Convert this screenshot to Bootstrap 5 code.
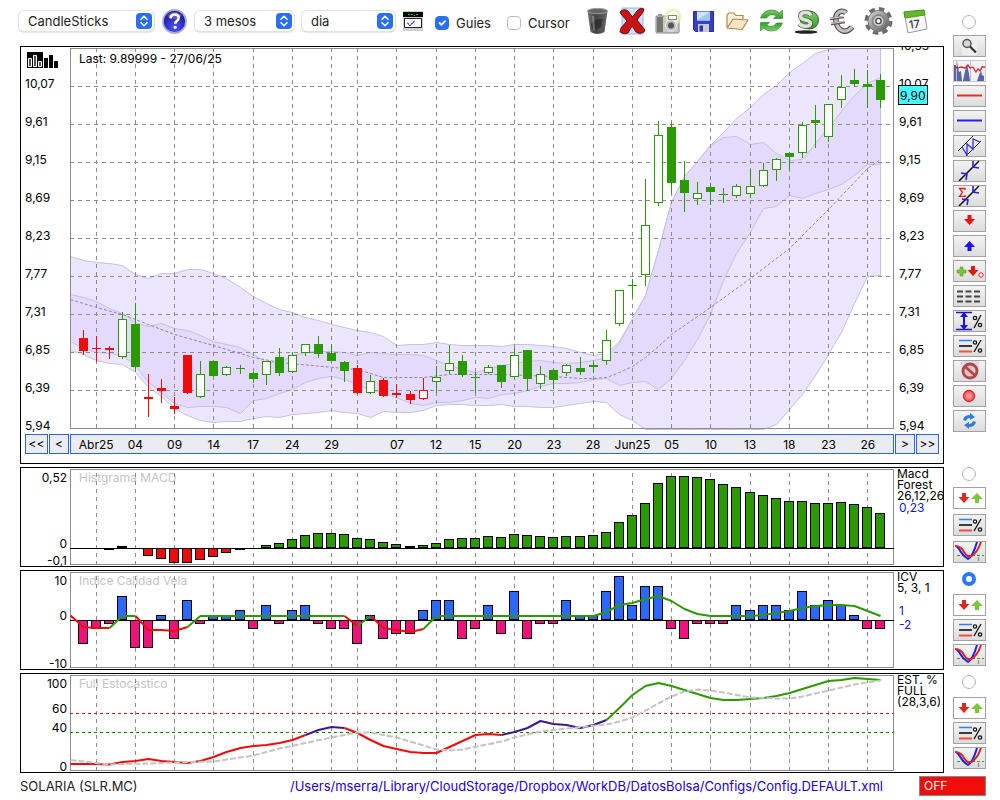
<!DOCTYPE html>
<html lang="ca">
<head>
<meta charset="utf-8">
<meta name="viewport" content="width=device-width, initial-scale=1">
<title>SOLARIA (SLR.MC)</title>
<link rel="stylesheet" href="https://cdn.jsdelivr.net/npm/bootstrap@5.3.0/dist/css/bootstrap.min.css">
<style>
body{font-family:Inter,"Liberation Sans",sans-serif;font-size:12px;line-height:16px;color:#000;background:#fff}
.page{padding:0 14px 0 20px}
.cols{gap:9px}
.panels{gap:3px}
.left-col,.plot{min-width:0}
.toolbar{height:46px;padding-bottom:4px;margin-left:-1px}
.toolbar .form-select{height:20px;padding:0 30px 0 9px;font-size:13px;line-height:20px;border:0;border-radius:5px;color:#222;background-color:#fff;
 box-shadow:0 0 0 1px #e2e2e2,0 1px 2px #aaa;background-repeat:no-repeat;background-position:right 2px center;background-size:16px 16px;
 background-image:url("data:image/svg+xml,%3Csvg xmlns='http://www.w3.org/2000/svg' viewBox='0 0 16 16'%3E%3Crect width='16' height='16' rx='4' fill='%232a6df6'/%3E%3Cpath d='M5 6.300l3-3 3 3M5 9.700l3 3 3-3' fill='none' stroke='%23fff' stroke-width='1.600' stroke-linecap='round' stroke-linejoin='round'/%3E%3C/svg%3E")}
.toolbar .sel-type{width:135px}.toolbar .sel-range{width:99px}.toolbar .sel-step{width:93px}
.tool{border:0;background:none;padding:0;display:block;line-height:0}
.tick{gap:7px;font-size:13px;color:#222}
.tick .form-check-input{width:14px;height:14px;margin:0;border:1px solid #bbb;border-radius:4px}
.tick .form-check-input:checked{background-color:#2a6df6;border-color:#2a6df6}
.icons{gap:10px;margin-right:16px}
.round-pick{width:14px;height:14px;margin:0 2px 0 0;display:block;border:1px solid #b5b5b5;background:#fff}
.round-pick:checked{background:#fff;border:4px solid #2a78f6;background-image:none}
.side{width:33px;flex:none}
.side .ibtn{width:33px;height:22px;padding:0;border:1px solid #a2a2a2;background:linear-gradient(#f3f3f3,#dcdcdc);display:block;line-height:0;overflow:hidden}
.side .ibtn.plain{background:#fff}
.side .ibtn.bare{border-color:#c8c8d8;background:#f1f1f7}
.ibtn svg{display:block;width:31px;height:20px}
.pick-top{height:35px;padding-top:15px}
.gap-a{gap:3px}.mt-a{margin-top:3px}
.grp{gap:3px;padding-top:2px}
.grp .round-pick{margin-bottom:5px}
.grp.wide{gap:5px;padding-top:0}
.grp.wide .round-pick{margin-bottom:1px}
.panel{border:1px solid #000;overflow:hidden;background:#fff}
.axis-l,.axis-r{width:49px;flex:none}
.main-plot{height:383px}
.ylab{height:38px;line-height:38px;padding-left:4px}
.axis-r .ylab{padding-left:5px}
.logo-slot{height:18px;padding:5px 0 0 6px}
.axis-r.main-y{margin-top:-20px}
.plot svg{display:block;width:100%;height:100%}
.note{left:9px;top:2px}
.note.first-note{top:4px}
.price{left:4px;top:38px;padding:0 1px;height:20px;line-height:20px;border:1px solid #000;background:#4ff}
.nav-row{padding:4px 4px 9px 4px;gap:1px}
.nav-row .step{flex:none;height:20px;padding:0;border:1px solid #2a63f2;background:#ebebf2;font-size:12px;line-height:18px;color:#000}
.nav-row .s2{width:23px}.nav-row .s1{width:20px}
.dates{height:20px;min-width:0;box-shadow:inset 0 0 0 1px #2a63f2;background:#ebebf2;display:grid;grid-template-columns:repeat(63,minmax(0,1fr));line-height:22px}
.dates span{justify-self:center;white-space:nowrap}
.sub{height:100px}
.scale{display:grid;padding:2px 3px 0 0;text-align:right;align-content:start}
.scale.macd{grid-template-rows:66px 17px 16px}
.scale.icv{grid-template-rows:35px 48px 16px}
.scale.sto{grid-template-rows:25px 19px 39px 16px}
.cap{line-height:11px;padding:0 0 0 3px;white-space:nowrap}
.cap .val{color:#11e;line-height:14px;padding-left:2px}
.cap .gap-top{padding-top:11px}
.faint{color:#c4c4c4}
.foot{height:26px;font-size:13px}
.foot span{color:#222}
.path-link{color:#2200e0;text-decoration:none;margin-right:36px}
.off{width:67px;height:20px;border:1px solid #888;background:#f20d0d;color:#fff;font-size:12px;line-height:16px;padding:0 0 0 4px;text-align:left}
</style>
</head>
<body>
<svg width="0" height="0" class="position-absolute" aria-hidden="true">
<defs>
<linearGradient id="gGray" x1="0" y1="0" x2="1" y2="1"><stop offset="0" stop-color="#ddd"/><stop offset=".5" stop-color="#999"/><stop offset="1" stop-color="#555"/></linearGradient>
<linearGradient id="gDark" x1="0" x2="1"><stop offset="0" stop-color="#777"/><stop offset=".4" stop-color="#444"/><stop offset="1" stop-color="#666"/></linearGradient>
<linearGradient id="gGreen" x1="0" y1="0" x2="0" y2="1"><stop offset="0" stop-color="#7fd06a"/><stop offset="1" stop-color="#2f9a2b"/></linearGradient>
<radialGradient id="gHelp" cx=".5" cy=".75" r=".7"><stop offset="0" stop-color="#4a55ff"/><stop offset="1" stop-color="#17128a"/></radialGradient>
<radialGradient id="gGlow"><stop offset="0" stop-color="#fff"/><stop offset=".6" stop-color="#fbf8cc"/><stop offset=".85" stop-color="#e9e29a"/><stop offset="1" stop-color="#fff" stop-opacity="0"/></radialGradient>
<symbol id="updown" viewBox="0 0 31 20"><path d="M8 5h4v4h3.500l-5.500 6-5.500-6H8z" fill="#dc2a20"/><path d="M21 15h4v-4h4l-6-6-6 6h4z" fill="#7cc63c"/></symbol>
<symbol id="pct" viewBox="0 0 31 20"><path d="M5 4.500h13" stroke="#3a7af5" stroke-width="1.500"/><path d="M5 10h13" stroke="#000" stroke-width="1.500"/><path d="M5 15.500h13" stroke="#f0503c" stroke-width="2"/><path d="M20 16L27 4" stroke="#111" stroke-width="1.300"/><circle cx="21" cy="6.500" r="1.700" fill="none" stroke="#111" stroke-width="1.200"/><circle cx="26" cy="14.500" r="1.700" fill="none" stroke="#111" stroke-width="1.200"/></symbol>
<symbol id="cross" viewBox="0 0 31 20"><path d="M3 13.500h27" stroke="#3a9b2c" stroke-dasharray="3 2"/><path d="M24.500 15v4" stroke="#999" stroke-width="1.500"/><path d="M2 4q3 2 5 6t7 7q5-3 9-17" fill="none" stroke="#1a22f0" stroke-width="2"/><path d="M1 4q6 0 9 6 4 7 9 3 5-4 8-13" fill="none" stroke="#e0241c" stroke-width="2"/></symbol>
</defs>
</svg>

<div class="page">
 <div class="d-flex cols">
  <div class="flex-fill left-col">
   <header class="toolbar d-flex align-items-center">
    <select class="form-select sel-type" aria-label="Tipus de gràfic"><option>CandleSticks</option></select>
    <button class="tool mx-2" type="button" aria-label="Ajuda"><svg width="25" height="25" viewBox="0 0 25 25"><circle cx="12.500" cy="12.500" r="11.500" fill="url(#gHelp)" stroke="#a9a9dc" stroke-width="1.800"/><path d="M5 7a9 9 0 0 1 15 0q-7 6-15 0z" fill="#8a8adf" opacity=".5"/><path d="M8.500 9.300q.3-3.800 4.200-3.800 4 0 4 3.300 0 2-2 3.300-1.400.9-1.400 2.700" fill="none" stroke="#fff" stroke-width="2.600"/><circle cx="13.200" cy="18.300" r="1.600" fill="#fff"/></svg></button>
    <select class="form-select sel-range" aria-label="Període"><option>3 mesos</option></select>
    <select class="form-select sel-step ms-2 me-2" aria-label="Interval"><option>dia</option></select>
    <button class="tool" type="button" aria-label="Indicadors"><svg width="20" height="20" viewBox="0 0 20 20"><path d="M0 0h20v20H0z" fill="#d0d0d0"/><path d="M0 1h20v5H0z"/><path d="M5 3.500h2m1 0h2m1 1h1m1-1h2" stroke="#2c2"/><path d="M1.500 7.500h17v9h-17z" fill="#fff" stroke="#222"/><path d="M4.500 12l2.500 2.500L12 9.500" fill="none" stroke="#22e" stroke-width="1.200" stroke-dasharray="2 .6"/></svg></button>
    <div class="form-check d-flex align-items-center tick p-0 m-0 pt-1 ms-2 ps-1"><input class="form-check-input float-none" type="checkbox" id="guies" checked><label for="guies">Guies</label></div>
    <div class="form-check d-flex align-items-center tick p-0 m-0 pt-1 ms-3"><input class="form-check-input float-none" type="checkbox" id="cursor"><label for="cursor">Cursor</label></div>
    <div class="d-flex align-items-center icons ms-auto">
     <button class="tool" type="button" aria-label="Paperera"><svg width="23" height="28" viewBox="0 0 23 28"><path d="M1.500 4l3 21q7 4 14 0l3-21z" fill="url(#gDark)"/><ellipse cx="11.500" cy="4" rx="10" ry="2.600" fill="#666" stroke="#999"/><path d="M5 17q5-6 12-5l-2 8q-6 4-9 2z" fill="#222" opacity=".6"/><path d="M7 9l1 14" stroke="#aaa" opacity=".5" stroke-width="2"/></svg></button>
     <button class="tool" type="button" aria-label="Esborra"><svg width="26" height="28" viewBox="0 0 26 28"><path d="M3 1h21v26H3z" fill="#cfe2fa" stroke="#8fb8ea"/><path d="M1 5q4-4 8-1l4.500 6L18 4q3-4 7-2l-1 3-6 8 8 10-1 2q-5 3-8 0l-4-6-4 7q-4 2-8-1l1-4 6-7-6-7z" fill="#c81414" stroke="#7a0808"/></svg></button>
     <button class="tool" type="button" aria-label="Captura"><svg width="27" height="28" viewBox="0 0 27 28"><rect x="1" y="9" width="23" height="17" rx="1" fill="#c9c9c5" stroke="#85857f"/><path d="M2 10h6v15H2z" fill="#777772"/><rect x="3" y="7" width="4" height="2" fill="#999"/><circle cx="18" cy="10" r="9" fill="url(#gGlow)" opacity=".75"/><circle cx="16" cy="18.500" r="5.500" fill="#bbb" stroke="#eee"/><circle cx="16" cy="18.500" r="3" fill="#555"/><rect x="13.500" y="8.500" width="8" height="4" fill="#fff" stroke="#888"/></svg></button>
     <button class="tool" type="button" aria-label="Desa"><svg width="23" height="28" viewBox="0 0 23 28"><path d="M1.500 4.500h20v20h-18l-2-2z" fill="#3a3fc0" stroke="#24289a"/><rect x="5" y="4.500" width="13" height="9" fill="#cfe4fb"/><path d="M5 13l13-8v8.500H5z" fill="#9cc6f4"/><rect x="6" y="17" width="11" height="8" fill="#c9c9cf"/><rect x="7.500" y="18.500" width="3.500" height="6" fill="#30359f"/></svg></button>
     <button class="tool" type="button" aria-label="Obre"><svg width="24" height="28" viewBox="0 0 24 28"><path d="M2 20V8l2-2h5l2 2.500h7V13" fill="#fdf0dc" stroke="#b98548" stroke-width="1.200"/><path d="M2 21L8 12l15 1-6 9.500z" fill="#fbe6c8" stroke="#b98548" stroke-width="1.200" stroke-linejoin="round"/></svg></button>
     <button class="tool" type="button" aria-label="Actualitza"><svg width="25" height="28" viewBox="0 0 25 28"><path id="rf" d="M1.500 11q3-8 11-8 5 0 8 3l3-3v8.500h-9l3-2.500q-6-4-10 2z" fill="url(#gGreen)" stroke="#2f8f2c" stroke-width=".7"/><use href="#rf" transform="rotate(180 12.500 13.500)"/></svg></button>
     <button class="tool" type="button" aria-label="Dòlar"><svg width="25" height="28" viewBox="0 0 25 28"><ellipse cx="12" cy="25" rx="11.500" ry="1.700" fill="#222"/><circle cx="15.500" cy="13" r="9" fill="url(#gGreen)" stroke="#2e5e2a"/><path d="M17 8.500q-1-3-5.500-3-5 0-5 3.800 0 2.700 5 3.700t5 3.200q0 3-5 3-4 0-6-2.500" fill="none" stroke="#4a5a46" stroke-width="5"/><path d="M17 8.500q-1-3-5.500-3-5 0-5 3.800 0 2.700 5 3.700t5 3.200q0 3-5 3-4 0-6-2.500" fill="none" stroke="#dde5d8" stroke-width="3.600"/></svg></button>
     <button class="tool" type="button" aria-label="Euro"><svg width="25" height="28" viewBox="0 0 25 28"><path d="M17 6q-3-3-7-1-4 3-3 9 1 8 7 10 5 1 9-4" fill="none" stroke="#4a4545" stroke-width="5.500"/><path d="M17 6q-3-3-7-1-4 3-3 9 1 8 7 10 5 1 9-4" fill="none" stroke="#c4bebe" stroke-width="3.400"/><path d="M1 12l14-2M2 17l14-2" stroke="#555" stroke-width="2.600"/><path d="M1 11.500l14-2M2 16.500l14-2" stroke="#ddd"/></svg></button>
     <button class="tool" type="button" aria-label="Configuració"><svg width="29" height="30" viewBox="0 0 29 30"><circle cx="14.500" cy="15" r="11.500" fill="none" stroke="#6c6c6c" stroke-width="5" stroke-dasharray="5.200 3.830"/><circle cx="14.500" cy="15" r="10.500" fill="url(#gGray)" stroke="#777"/><circle cx="14.500" cy="15" r="6" fill="none" stroke="#888" stroke-width="2"/><circle cx="14.500" cy="15" r="5" fill="#ccc"/><circle cx="14.500" cy="15" r="2.600" fill="#fff" stroke="#444" stroke-width="1.300"/></svg></button>
     <button class="tool" type="button" aria-label="Calendari"><svg width="25" height="28" viewBox="0 0 25 28"><path d="M1 5l20-2 3 19-19 4z" fill="#f6f6f6" stroke="#999"/><path d="M1 5l20-2 1 5-20 3z" fill="#63b72a" stroke="#4c9a1c"/><text x="6" y="21" font-size="11" font-weight="500" fill="#333" transform="rotate(-8 12 17)">17</text></svg></button>
    </div>
   </header>

   <main class="panel">
    <div class="d-flex main-plot">
     <div class="axis-l">
      <div class="logo-slot"><svg class="d-block" width="32" height="17" viewBox="0 0 32 17"><path d="M0 0h16v16H0z"/><path d="M1.500 6.500h3v8h-3zM6.500 3.500h3v11h-3zM11.500 9.500h3v5h-3z" fill="#555" stroke="#fff"/><path d="M17 6h4v10h-4zM22 3h4v13h-4zM27 9h4v7h-4z"/></svg></div>
      <div class="ylab">10,07</div><div class="ylab">9,61</div><div class="ylab">9,15</div><div class="ylab">8,69</div><div class="ylab">8,23</div><div class="ylab">7,77</div><div class="ylab">7,31</div><div class="ylab">6,85</div><div class="ylab">6,39</div><div class="ylab">5,94</div>
     </div>
     <div class="plot flex-fill position-relative">
      <svg id="price" viewBox="70 47 824 383" preserveAspectRatio="none" role="img" aria-label="Cotització"></svg>
      <div class="note first-note position-absolute">Last: 9.89999 - 27/06/25</div>
     </div>
     <div class="position-relative">
      <div class="axis-r main-y">
       <div class="ylab">10,53</div><div class="ylab">10,07</div><div class="ylab">9,61</div><div class="ylab">9,15</div><div class="ylab">8,69</div><div class="ylab">8,23</div><div class="ylab">7,77</div><div class="ylab">7,31</div><div class="ylab">6,85</div><div class="ylab">6,39</div><div class="ylab">5,94</div>
      </div>
      <div class="price position-absolute">9,90</div>
     </div>
    </div>
    <div class="nav-row d-flex">
     <button class="step s2" type="button">&lt;&lt;</button><button class="step s1" type="button">&lt;</button>
     <div class="dates flex-fill" id="dates"></div>
     <button class="step s1" type="button">&gt;</button><button class="step s2" type="button">&gt;&gt;</button>
    </div>
   </main>
  </div>

  <aside class="side d-flex flex-column">
   <div class="pick-top d-flex justify-content-center"><input class="form-check-input round-pick" type="radio" name="pane" aria-label="Gràfic principal"></div>
   <div class="d-flex flex-column gap-a">
    <button class="ibtn" type="button" aria-label="Zoom"><svg viewBox="0 0 31 20"><path d="M8 1h15v18H8z" fill="#eee"/><circle cx="13" cy="7.500" r="4" fill="#d5d5d5" stroke="#555" stroke-width="1.500"/><path d="M16 10.500l6 6" stroke="#333" stroke-width="2.200"/></svg></button>
    <button class="ibtn bare" type="button" aria-label="Volum"><svg viewBox="0 0 31 20"><path d="M0 20V4h2l1-3 2 10 2-1 1 10zM9 20l2-10 2-7 2 10 1 7zM23 20l2-6 2-4 1 4 2 1v5z" fill="#5a62a8"/><path d="M16.500 0v20M2.500 0v20" stroke="#b8bce0"/><path d="M0 6l4 1 3-1 4 1 3-3 2 3 3-1 3 5 2-3 2 2 2-4h3" fill="none" stroke="#d8281e" stroke-width="1.300"/></svg></button>
    <button class="ibtn" type="button" aria-label="Línia vermella"><svg viewBox="0 0 31 20"><path d="M3 9.500h25" stroke="#e0302c" stroke-width="2"/></svg></button>
    <button class="ibtn" type="button" aria-label="Línia blava"><svg viewBox="0 0 31 20"><path d="M3 9.500h25" stroke="#2020ff" stroke-width="2"/></svg></button>
    <button class="ibtn" type="button" aria-label="Canal"><svg viewBox="0 0 31 20"><path d="M4 15L19 0M12 20L27 5" stroke="#222"/><path d="M8 11l5 8V8l6 5V3l7 3" fill="none" stroke="#3b32e8" stroke-width="1.300"/></svg></button>
    <button class="ibtn" type="button" aria-label="Tendència"><svg viewBox="0 0 31 20"><path d="M5 20L25 0" stroke="#111" stroke-width="1.500"/><path d="M7 12l6 1-1 6M25 7l-6-1V0" fill="none" stroke="#2a22e0" stroke-width="1.600"/></svg></button>
    <button class="ibtn" type="button" aria-label="Suma tendència"><svg viewBox="0 0 31 20"><path d="M5 20L25 0" stroke="#111" stroke-width="1.500"/><path d="M8 13l6 1-1 5M25 7l-6-1V0" fill="none" stroke="#2a22e0" stroke-width="1.600"/><path d="M11 4V2.500H5.500l3 3.800-3 4H11V9" fill="none" stroke="#d22" stroke-width="1.300"/></svg></button>
    <button class="ibtn" type="button" aria-label="Fletxa avall"><svg viewBox="0 0 31 20"><path d="M13.500 4h4v4H21l-5.500 6L10 8h3.500z" fill="#f80e06"/></svg></button>
    <button class="ibtn" type="button" aria-label="Fletxa amunt"><svg viewBox="0 0 31 20"><path d="M13.500 15h4v-4H21l-5.500-6-5.500 6h3.500z" fill="#1c10ff"/></svg></button>
    <button class="ibtn" type="button" aria-label="Senyals"><svg viewBox="0 0 31 20"><path d="M6 6h3v3h3v3H9v3H6v-3H3V9h3z" fill="#7cc63c" stroke="#4e9a28" stroke-width=".6"/><path d="M17 5h4v4h3.500L19 15l-5.500-6H17z" fill="#e01a10"/><circle cx="27" cy="14" r="2.200" fill="#fff" stroke="#e22"/></svg></button>
    <button class="ibtn" type="button" aria-label="Graella"><svg viewBox="0 0 31 20"><path d="M3 5.500h25M3 10.500h25M3 15.500h25" stroke="#444" stroke-width="1.800" stroke-dasharray="6 2.500"/></svg></button>
    <button class="ibtn" type="button" aria-label="Rang percentual"><svg viewBox="0 0 31 20"><path d="M2 1.500h16M2 18.500h16" stroke="#1c10e8" stroke-width="1.300"/><path d="M10 3v14" stroke="#1c10e8" stroke-width="2"/><path d="M10 1l4 5H6zM10 19l4-5H6z" fill="#1c10e8"/><path d="M20 17L27 4" stroke="#111" stroke-width="1.300"/><circle cx="21" cy="7" r="1.700" fill="none" stroke="#111" stroke-width="1.200"/><circle cx="26" cy="14" r="1.700" fill="none" stroke="#111" stroke-width="1.200"/></svg></button>
    <button class="ibtn" type="button" aria-label="Nivells"><svg><use href="#pct"/></svg></button>
    <button class="ibtn" type="button" aria-label="Prohibit"><svg viewBox="0 0 31 20"><path d="M7 0h18v20H7z" fill="#dcdce8"/><circle cx="16" cy="10" r="7" fill="#e6c4c4" stroke="#b04848" stroke-width="2.800"/><path d="M11 5.500l10 9" stroke="#b04848" stroke-width="2.800"/></svg></button>
    <button class="ibtn" type="button" aria-label="Grava"><svg viewBox="0 0 31 20"><circle cx="15" cy="10" r="5.500" fill="#f66" stroke="#e02020" stroke-width="1.300"/><circle cx="15" cy="10" r="2.600" fill="#fa9a9a"/></svg></button>
    <button class="ibtn" type="button" aria-label="Recarrega"><svg viewBox="0 0 31 20"><path d="M9 9q1-5 7-5V2l5 4-5 3V7q-3 0-4 3zM22 11q-1 5-7 5v2l-5-4 5-3v2q3 0 4-3z" fill="#2b7fd8"/></svg></button>
   </div>
  </aside>
 </div>

 <div class="d-flex flex-column panels mt-a">
  <div class="d-flex cols">
   <section class="panel sub flex-fill d-flex left-col">
    <div class="axis-l scale macd"><span>0,52</span><span>0</span><span>-0,1</span></div>
    <div class="plot flex-fill position-relative"><div class="note faint position-absolute">Histgrama MACD</div><svg id="macd" class="position-relative" viewBox="70 468 824 98" preserveAspectRatio="none" role="img" aria-label="MACD"></svg></div>
    <div class="axis-r cap"><div>Macd</div><div>Forest</div><div>26,12,26</div><div class="val">0,23</div></div>
   </section>
   <aside class="side d-flex flex-column align-items-center grp wide">
    <input class="form-check-input round-pick" type="radio" name="pane" aria-label="MACD">
    <button class="ibtn plain" type="button" aria-label="Senyals MACD"><svg><use href="#updown"/></svg></button>
    <button class="ibtn" type="button" aria-label="Nivells MACD"><svg><use href="#pct"/></svg></button>
    <button class="ibtn" type="button" aria-label="Creuaments MACD"><svg><use href="#cross"/></svg></button>
   </aside>
  </div>
  <div class="d-flex cols">
   <section class="panel sub flex-fill d-flex left-col">
    <div class="axis-l scale icv"><span>10</span><span>0</span><span>-10</span></div>
    <div class="plot flex-fill position-relative"><div class="note faint position-absolute">Indice Calidad Vela</div><svg id="icv" class="position-relative" viewBox="70 571 824 98" preserveAspectRatio="none" role="img" aria-label="ICV"></svg></div>
    <div class="axis-r cap"><div>ICV</div><div>5, 3, 1</div><div class="val gap-top">1</div><div class="val">-2</div></div>
   </section>
   <aside class="side d-flex flex-column align-items-center grp">
    <input class="form-check-input round-pick" type="radio" name="pane" aria-label="ICV" checked>
    <button class="ibtn plain" type="button" aria-label="Senyals ICV"><svg><use href="#updown"/></svg></button>
    <button class="ibtn" type="button" aria-label="Nivells ICV"><svg><use href="#pct"/></svg></button>
    <button class="ibtn" type="button" aria-label="Creuaments ICV"><svg><use href="#cross"/></svg></button>
   </aside>
  </div>
  <div class="d-flex cols">
   <section class="panel sub flex-fill d-flex left-col">
    <div class="axis-l scale sto"><span>100</span><span>60</span><span>40</span><span>0</span></div>
    <div class="plot flex-fill position-relative"><div class="note faint position-absolute">Full Estocastico</div><svg id="sto" class="position-relative" viewBox="70 674 824 98" preserveAspectRatio="none" role="img" aria-label="Estocàstic"></svg></div>
    <div class="axis-r cap"><div>EST. %</div><div>FULL</div><div>(28,3,6)</div></div>
   </section>
   <aside class="side d-flex flex-column align-items-center grp">
    <input class="form-check-input round-pick" type="radio" name="pane" aria-label="Estocàstic">
    <button class="ibtn plain" type="button" aria-label="Senyals estocàstic"><svg><use href="#updown"/></svg></button>
    <button class="ibtn" type="button" aria-label="Nivells estocàstic"><svg><use href="#pct"/></svg></button>
    <button class="ibtn" type="button" aria-label="Creuaments estocàstic"><svg><use href="#cross"/></svg></button>
   </aside>
  </div>
 </div>
 <footer class="foot d-flex align-items-center">
  <span>SOLARIA (SLR.MC)</span>
  <a class="ms-auto path-link" href="#config">/Users/mserra/Library/CloudStorage/Dropbox/WorkDB/DatosBolsa/Configs/Config.DEFAULT.xml</a>
  <button class="off" type="button">OFF</button>
 </footer>
</div>

<script src="https://cdn.jsdelivr.net/npm/bootstrap@5.3.0/dist/js/bootstrap.bundle.min.js"></script>
<script>
const GREEN='#2a9a00', RED='#f00a0a', GRID='#8c8c8c';
const X=i=>70+Math.floor(13.078*i)+.5;
const ticks={2:'Abr25',5:'04',8:'09',11:'14',14:'17',17:'24',20:'29',25:'07',28:'12',31:'15',34:'20',37:'23',40:'28',43:'Jun25',46:'05',49:'10',52:'13',55:'18',58:'23',61:'26'};
const gridAt=[2,5,8,11,14,17,20,22,25,28,31,34,37,40,43,46,49,52,55,58,61];
const el=(tag,a)=>'<'+tag+' '+Object.entries(a).map(([k,v])=>k+'="'+v+'"').join(' ')+'/>';
const line=(x1,y1,x2,y2,stroke,dash)=>el('line',{x1,y1,x2,y2,stroke,'stroke-dasharray':dash||'none','shape-rendering':'crispEdges'});
const poly=(pts,stroke,w,dash)=>el('polyline',{points:pts.map(p=>p.join(',')).join(' '),fill:'none',stroke,'stroke-width':w,'stroke-dasharray':dash||'none','stroke-linejoin':'round'});
const series=a=>a.map((y,i)=>[X(i),y+.5]);
const sparse=a=>a.map(p=>[X(p[0]),p[1]+.5]);
const grid=(y1,y2)=>gridAt.map(i=>line(X(i),y1,X(i),y2,GRID,'4 4')).join('');
const frame=(t,b)=>line(70,t+.5,894,t+.5,GRID)+line(70,b+.5,894,b+.5,GRID)+line(70.5,t,70.5,b,GRID)+line(893.5,t,893.5,b,GRID);

/* date labels sit in a grid with one column per session, centred on their session's line */
document.getElementById('dates').innerHTML=Object.entries(ticks).map(([i,t])=>`<span style="grid-area:1/${+i}/2/span 2">${t}</span>`).join('');

/* Bollinger bands: outer, inner and the mean */
const outerUp=[256,260,262,263,265,274,278,273,273,269,269,273,278,287,296,303,309,312,317,320,324,327,330,332,336,345,344,344,342,344,345,345,345,346,344,344,345,346,348,352,355,353,341,318,295,250,202,176,161,145,132,118,107,94,85,72,63,53,49,48,48,48,48];
const outerLo=[350,354,360,363,364,372,387,396,408,415,420,422,421,421,418,416,417,414,413,412,410,412,413,417,411,412,412,410,405,404,404,405,405,404,406,406,407,407,405,403,401,402,414,420,429,429,429,429,429,429,429,429,429,429,424,409,394,375,354,332,303,276,275];
const innerUp=[294,297,301,308,313,322,326,323,328,330,335,341,344,347,354,362,362,355,352,351,351,352,355,352,353,354,354,355,360,365,369,372,369,365,363,361,360,362,363,362,360,357,343,318,295,250,202,176,161,145,137,136,144,142,153,160,159,143,127,111,95,83,77];
const innerLo=[341,348,352,353,355,365,382,392,403,407,406,406,407,413,400,398,393,389,382,378,376,379,384,389,393,397,403,405,402,402,400,397,398,394,393,390,386,383,383,382,379,378,385,382,381,389,378,360,339,314,280,253,232,208,206,195,198,193,189,184,175,164,164];
const mean=[[0,299],[2,307],[4,314],[6,324],[8,334],[11,345],[14,357],[16,362],[21,368],[22,369],[23,373],[24,377],[27,377],[29,374],[33,374],[37,376],[39,378],[40,378],[41,377],[42,372],[43,366],[44,357],[45,346],[46,334],[49,307],[52,278],[55,248],[58,209],[61,168],[62,159]];
const band=(u,l,fill)=>el('polygon',{points:series(u).concat(series(l).reverse()).map(p=>p.join(',')).join(' '),fill,stroke:'#c6c0e4'});

/* candles: kind (G/R filled, g/r hollow), high, body top, body bottom, low */
const candles=`R330,338,351,355 R336,348,349,362 R346,348,350,359 g312,319,357,359 G303,324,367,371 R374,397,399,417 R379,388,391,403 R397,406,409,414 R355,355,393,394 g361,374,397,398
G361,361,376,377 g366,367,375,376 G365,368,369,374 G372,373,379,383 g361,361,375,385 G348,357,373,376 g352,355,372,373 g344,344,353,356 G336,344,354,358 G344,353,361,361 G361,362,371,382
R365,368,393,394 g375,381,393,394 R378,380,396,397 R384,393,395,398 R391,394,400,404 r378,390,399,400 g366,377,382,393 g345,363,371,374 G355,361,375,377 G372,377,378,393 g365,367,373,374 G365,365,382,388 g348,355,377,379 G350,350,379,391 g366,374,384,389 G369,370,380,389 g364,365,373,376 G357,368,372,375 G362,365,367,373 g330,340,361,365 g290,290,324,326 G279,285,286,297 g179,225,275,286
g121,135,203,206 G123,127,183,193 G161,180,193,212 g182,193,199,205 G183,187,192,205 G188,194,195,203 g184,186,196,198 g169,186,194,198 g163,170,186,187 g158,159,170,181 G153,153,157,170 g122,125,153,158 G105,120,123,148 g104,104,137,142 g75,87,100,108 G69,80,84,87 G70,84,87,108 G74,80,100,108`.split(/\s+/);
const drawCandle=(s,k)=>{
 const x=X(k+1), c=s[0].toUpperCase()==='G'?GREEN:RED, v=s.slice(1).split(',').map(Number), hollow=s[0]===s[0].toLowerCase();
 return line(x,v[0],x,v[3],c)+(hollow?el('rect',{x:x-4,y:v[1]+.5,width:8,height:v[2]-v[1]-1,fill:'#fff',stroke:c,'shape-rendering':'crispEdges'})
  :el('rect',{x:x-4.5,y:v[1],width:9,height:v[2]-v[1],fill:c,'shape-rendering':'crispEdges'}));
};
let h=band(outerUp,outerLo,'#ebe6fe')+band(innerUp,innerLo,'#e3dafd')+poly(sparse(mean),'#8f86ad',1,'3 2');
h+=grid(48,430)+[86,124,162,200,238,276,314,352,390].map(y=>line(70,y+.5,894,y+.5,GRID,'4 4')).join('')+frame(48,428);
h+=candles.map(drawCandle).join('');
document.getElementById('price').innerHTML=h;

/* histogram bars from a zero line; value = height, positive upwards */
const bars=(vals,zero,up,down)=>vals.map((v,i)=>{
 if(!v) return '';
 const x=X(i)-5; const a=Math.abs(v);
 return el('rect',{x:x,y:v>0?zero-a+.5:zero+.5,width:9,height:a<2?1:a-(v>0?1:0),fill:v>0?up:down,stroke:'#000','shape-rendering':'crispEdges'});
}).join('');
const macd=[0,0,0,-1,2,0,-7,-10,-14,-14,-11,-8,-4,-1,0,3,5,9,13,15,15,14,10,9,6,4,2,3,5,9,10,10,12,11,14,13,12,11,12,12,13,16,26,33,45,65,72,72,71,69,64,61,56,53,50,47,47,45,45,46,44,41,35];
document.getElementById('macd').innerHTML=grid(473,566)+frame(469,564)+bars(macd,548,GREEN,RED)+line(70,548.5,895,548.5,'#000');

const icv=[0,-23,-8,-3,24,-27,-27,5,-18,20,-3,5,5,10,-8,15,-3,10,15,-3,-8,-8,-23,5,-18,-13,-13,10,20,20,-18,-8,15,-13,29,-18,-3,-3,20,5,5,29,44,15,34,34,-8,-18,-3,-3,-3,15,10,15,15,10,29,15,20,15,5,-8,-8];
const runs=(list)=>list.map(([from,c,ys,w])=>poly(ys.map((y,k)=>[X(from+k),y]),c,w||2)).join('');
document.getElementById('icv').innerHTML=grid(576,669)+frame(572,667)+bars(icv,620,'#2a68ff','#f0127a')+line(70,620.5,895,620.5,'#000')+runs([
 [0,RED,[615.5,627,628,628]],[3,GREEN,[628,616,616]],[5,RED,[616,630,630,631,627]],[9,GREEN,[627,616,616,616,616,616,616,616,616,616,616,616,616]],[21,RED,[616,626]],[22,GREEN,[626,616]],[23,RED,[616,628,630,632,629]],
 [27,GREEN,[629,616,616,616,616,616,616,616,616,616,616,616,616,616,612,605,603,599,596,601,609,614,616,616,616,616,615,613,611,608,606,605,605,606,611,616]]]);

const slow=[[0,759.5],[3,764],[6,763],[8,762],[11,761],[14,755],[16,748],[20,737],[22,732],[23,732],[25,737],[27,745],[28,749],[29,750],[30,749],[33,741],[34,737],[36,731],[38,728],[41,724],[42,721],[43,717],[44,710],[45,703],[46,696],[47,691],[48,689],[49,690],[50,692],[52,697],[54,698],[55,698],[56,696],[58,690],[60,684],[62,680]];
document.getElementById('sto').innerHTML=grid(679,772)+frame(675,770)+line(70,713.5,895,713.5,RED,'3 3')+line(70,732.5,895,732.5,'#1c7a00','3 3')+runs([
 [0,RED,[764,764,764,764.5,762,761,759,761,762,763,761,757,752,748,746,745,743,740,735]],[18,'#3a1c8c',[735,730,727,728]],[21,RED,[728,733,740,746,749,752,753,753,747,741,735,734,735]],[33,'#3a1c8c',[735,732,728,721,724,725,728,725,720]],
 [41,GREEN,[720,708,695,686,683,686,690,694,698,700,700,699,698,696,693,689,685,681,680,678,679,680]]])+poly(sparse(slow),'#c4c4c4',2,'6 2');
</script>
</body>
</html>
